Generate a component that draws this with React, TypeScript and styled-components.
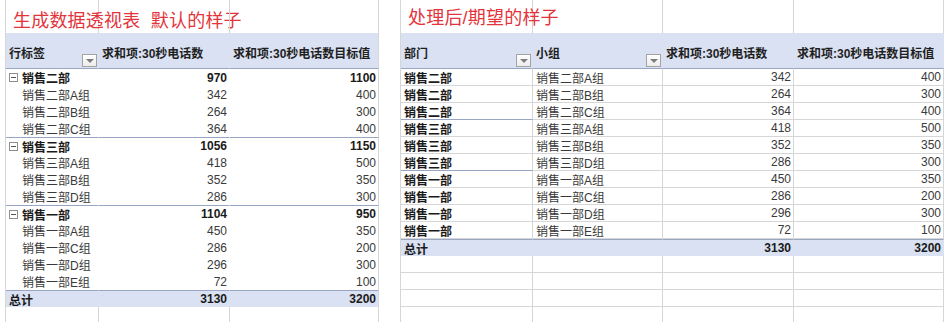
import React from 'react';
import styled, { createGlobalStyle } from 'styled-components';

const GRID = '#d6d6d6';
const BAND = '#d9e1f2';
const RULE = '#98a6c4';

const GlobalStyle = createGlobalStyle`
  html, body {
    margin: 0;
    padding: 0;
    background: #ffffff;
  }
  body {
    font-family: "Liberation Sans", "Noto Sans CJK SC", sans-serif;
  }
  *, *::before, *::after {
    box-sizing: border-box;
  }
`;

const Sheet = styled.div`
  display: flex;
  align-items: stretch;
  width: 951px;
  height: 322px;
  padding-left: 5px;
  overflow: hidden;
  font-size: 12px;
  color: #1f1f1f;
`;

const Block = styled.section<{ $cols: string }>`
  display: grid;
  grid-template-columns: ${({ $cols }) => $cols};
  grid-template-rows: 33px 36px;
  grid-auto-rows: 17px;
  align-content: start;
  border-left: 1px solid ${GRID};
`;

const Gap = styled.div`
  width: 21px;
  flex: none;
`;

// cells of the grid; $edge draws the sheet gridline on the right
const TitleCell = styled.div<{ $edge?: boolean; $top?: number }>`
  padding: ${({ $top }) => $top ?? 12}px 0 0 7px;
  border-right: 1px solid ${({ $edge }) => ($edge ? GRID : 'transparent')};
  white-space: nowrap;
`;

const Title = styled.span`
  font-size: 18px;
  line-height: 18px;
  color: #e3343c;
  letter-spacing: 0.2px;
`;

const HeadCell = styled.div<{ $edge?: boolean }>`
  display: flex;
  align-items: center;
  padding: 3px 0 0 3px;
  background: ${BAND};
  border-bottom: 1px solid ${RULE};
  border-right: 1px solid ${({ $edge }) => ($edge ? GRID : 'transparent')};
  font-weight: 700;
  white-space: nowrap;
`;

const HeadLabel = styled.span`
  flex: 1;
`;

const FilterButton = styled.span`
  display: flex;
  align-items: center;
  justify-content: center;
  align-self: flex-end;
  width: 15px;
  height: 13px;
  margin: 0 1px 1px 0;
  border: 1px solid #a3a3a3;
  background: linear-gradient(#ffffff, #ececec);

  &::after {
    content: '';
    border-left: 4px solid transparent;
    border-right: 4px solid transparent;
    border-top: 4px solid #7d7d7d;
  }
`;

const Cell = styled.div<{
  $num?: boolean;
  $bold?: boolean;
  $edge?: boolean;
  $ruleTop?: boolean;
  $under?: string;
  $band?: boolean;
  $indent?: number;
  $muted?: boolean;
}>`
  display: flex;
  align-items: center;
  justify-content: ${({ $num }) => ($num ? 'flex-end' : 'flex-start')};
  padding: 0 ${({ $num }) => ($num ? 2 : 0)}px 0 ${({ $indent }) => $indent ?? 3}px;
  background: ${({ $band }) => ($band ? BAND : 'transparent')};
  border-top: ${({ $ruleTop }) => ($ruleTop ? `1px solid ${RULE}` : 'none')};
  border-bottom: ${({ $under }) => ($under ? `1px solid ${$under}` : 'none')};
  border-right: 1px solid ${({ $edge }) => ($edge ? GRID : 'transparent')};
  font-weight: ${({ $bold }) => ($bold ? 700 : 400)};
  color: ${({ $muted }) => ($muted ? '#3a3a3a' : '#1a1a1a')};
  white-space: nowrap;
`;

const Collapse = styled.span`
  position: relative;
  width: 9px;
  height: 9px;
  margin-right: 4px;
  border: 1px solid #8e8e8e;
  background: #fff;
  flex: none;

  &::after {
    content: '';
    position: absolute;
    left: 1px;
    right: 1px;
    top: 3px;
    height: 1px;
    background: #555;
  }
`;

type Group = { name: string; calls: number; target: number; teams: [string, number, number][] };

const groups: Group[] = [
  {
    name: '销售二部',
    calls: 970,
    target: 1100,
    teams: [
      ['销售二部A组', 342, 400],
      ['销售二部B组', 264, 300],
      ['销售二部C组', 364, 400],
    ],
  },
  {
    name: '销售三部',
    calls: 1056,
    target: 1150,
    teams: [
      ['销售三部A组', 418, 500],
      ['销售三部B组', 352, 350],
      ['销售三部D组', 286, 300],
    ],
  },
  {
    name: '销售一部',
    calls: 1104,
    target: 950,
    teams: [
      ['销售一部A组', 450, 350],
      ['销售一部C组', 286, 200],
      ['销售一部D组', 296, 300],
      ['销售一部E组', 72, 100],
    ],
  },
];

const CALLS = '求和项:30秒电话数';
const TARGET = '求和项:30秒电话数目标值';

const DefaultPivot: React.FC = () => (
  <Block $cols="93px 131px 149px">
    <TitleCell $edge>
      <Title>生成数据透视表&nbsp;&nbsp;默认的样子</Title>
    </TitleCell>
    <TitleCell $edge />
    <TitleCell $edge />

    <HeadCell>
      <HeadLabel>行标签</HeadLabel>
      <FilterButton />
    </HeadCell>
    <HeadCell>{CALLS}</HeadCell>
    <HeadCell $edge>{TARGET}</HeadCell>

    {groups.map((g, gi) => (
      <React.Fragment key={g.name}>
        <Cell $bold $ruleTop={gi > 0}>
          <Collapse />
          {g.name}
        </Cell>
        <Cell $num $bold $ruleTop={gi > 0}>
          {g.calls}
        </Cell>
        <Cell $num $bold $edge $ruleTop={gi > 0}>
          {g.target}
        </Cell>
        {g.teams.map(([team, calls, target]) => (
          <React.Fragment key={team}>
            <Cell $indent={16} $muted>
              {team}
            </Cell>
            <Cell $num $muted>
              {calls}
            </Cell>
            <Cell $num $muted $edge>
              {target}
            </Cell>
          </React.Fragment>
        ))}
      </React.Fragment>
    ))}

    <Cell $band $bold $ruleTop>
      总计
    </Cell>
    <Cell $band $bold $num $ruleTop>
      3130
    </Cell>
    <Cell $band $bold $num $edge $ruleTop>
      3200
    </Cell>

    <Cell $edge />
    <Cell $edge />
    <Cell $edge />
  </Block>
);

const FlatTable: React.FC = () => {
  const rows = groups.flatMap((g) =>
    g.teams.map(([team, calls, target], i) => ({
      dept: g.name,
      team,
      calls,
      target,
      last: i === g.teams.length - 1,
    }))
  );

  return (
    <Block $cols="132px 130px 131px 150px">
      <TitleCell $edge $top={9}>
        <Title>处理后/期望的样子</Title>
      </TitleCell>
      <TitleCell $edge />
      <TitleCell $edge />
      <TitleCell $edge />

      <HeadCell>
        <HeadLabel>部门</HeadLabel>
        <FilterButton />
      </HeadCell>
      <HeadCell>
        <HeadLabel>小组</HeadLabel>
        <FilterButton />
      </HeadCell>
      <HeadCell>{CALLS}</HeadCell>
      <HeadCell>{TARGET}</HeadCell>

      {rows.map((r, i) => {
        const split = r.last && i < rows.length - 1;
        return (
          <React.Fragment key={r.team}>
            <Cell $bold $edge $under={split ? RULE : GRID}>
              {r.dept}
            </Cell>
            <Cell $muted $edge $under={GRID}>
              {r.team}
            </Cell>
            <Cell $num $muted $edge $under={GRID}>
              {r.calls}
            </Cell>
            <Cell $num $muted $edge $under={GRID}>
              {r.target}
            </Cell>
          </React.Fragment>
        );
      })}

      <Cell $band $bold $ruleTop>
        总计
      </Cell>
      <Cell $band $ruleTop />
      <Cell $band $bold $num $ruleTop>
        3130
      </Cell>
      <Cell $band $bold $num $ruleTop>
        3200
      </Cell>

      {[0, 1, 2, 3].map((r) => (
        <React.Fragment key={r}>
          <Cell $edge $under={GRID} />
          <Cell $edge $under={GRID} />
          <Cell $edge $under={GRID} />
          <Cell $edge $under={GRID} />
        </React.Fragment>
      ))}
    </Block>
  );
};

export default function App() {
  return (
    <>
      <GlobalStyle />
      <Sheet>
        <DefaultPivot />
        <Gap />
        <FlatTable />
      </Sheet>
    </>
  );
}
